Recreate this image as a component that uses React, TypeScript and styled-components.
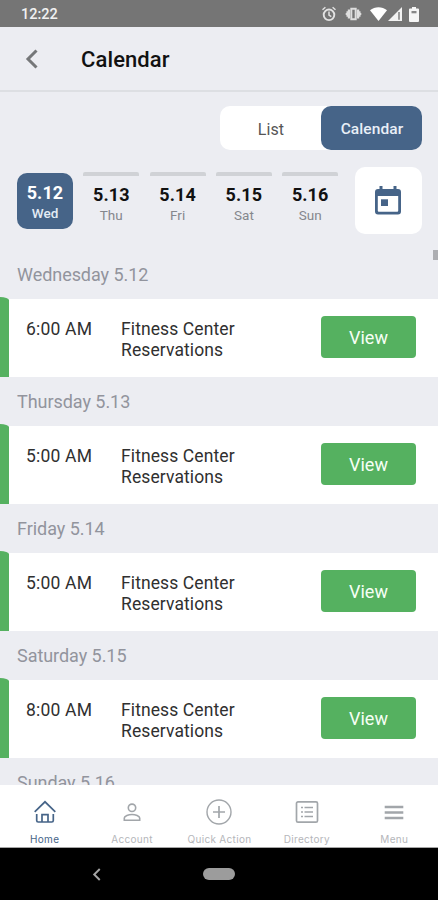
import React from "react";
import styled, { createGlobalStyle } from "styled-components";

const blue = "#466488";
const green = "#55b160";
const surface = "#ecedf2";

const GlobalStyle = createGlobalStyle`
  * { box-sizing: border-box; }
  body { margin: 0; background: ${surface}; font-family: Roboto, sans-serif; }
  button { font: inherit; border: 0; padding: 0; margin: 0; background: none; }
`;

const Screen = styled.div`
  width: 438px;
  height: 900px;
  display: flex;
  flex-direction: column;
  overflow: hidden;
  background: ${surface};
`;

const StatusBar = styled.div`
  height: 27px;
  flex: none;
  display: flex;
  align-items: center;
  justify-content: space-between;
  padding: 1px 19px 0 21px;
  background: #757575;
  color: #f1f1f1;
  font-size: 14.5px;
  font-weight: 500;
  line-height: 18px;
  span { padding-top: 1px; }
`;

const StatusIcons = styled.div`
  display: flex;
  align-items: center;
  svg { display: block; }
`;

const Header = styled.header`
  height: 65px;
  flex: none;
  display: flex;
  align-items: center;
  border-bottom: 2px solid #dddfe3;
  padding: 0 0 0 25px;
`;

const BackButton = styled.button`
  width: 56px;
  display: flex;
  svg { display: block; }
`;

const Title = styled.h1`
  margin: 2px 0 0;
  font-size: 22px;
  font-weight: 500;
  letter-spacing: 0.1px;
  color: #111;
`;

const Controls = styled.div`
  flex: none;
  height: 158px;
  padding: 14px 17px 0;
`;

const Segmented = styled.div`
  width: 202px;
  height: 44px;
  margin-left: auto;
  margin-right: -1px;
  display: flex;
  border-radius: 10px;
  background: #fff;
`;

const Segment = styled.button<{ $active?: boolean }>`
  flex: 1;
  padding: 2px 0 0 1px;
  border-radius: 10px;
  font-size: ${(p) => (p.$active ? "15.5px" : "16px")};
  letter-spacing: 0.1px;
  color: ${(p) => (p.$active ? "#e9eff7" : "#555")};
  background: ${(p) => (p.$active ? blue : "transparent")};
  font-weight: ${(p) => (p.$active ? 500 : 400)};
`;

const DateStrip = styled.div`
  display: flex;
  margin-top: 17px;
`;

const DayList = styled.div`
  display: flex;
  gap: 10.3px;
  padding-top: 6px;
`;

const Day = styled.button<{ $active?: boolean }>`
  width: 56px;
  height: 56px;
  display: flex;
  flex-direction: column;
  align-items: center;
  margin-top: ${(p) => (p.$active ? 0 : "-1px")};
  padding-top: ${(p) => (p.$active ? "9px" : "8px")};
  border-top: ${(p) => (p.$active ? "0" : "4px solid #d0d2d6")};
  border-radius: ${(p) => (p.$active ? "10px" : "2px")};
  background: ${(p) => (p.$active ? blue : "transparent")};
  color: ${(p) => (p.$active ? "#fff" : "#111")};
`;

const DayNumber = styled.span`
  font-size: 18px;
  line-height: 22px;
  font-weight: 700;
  letter-spacing: 0.1px;
`;

const DayName = styled.span<{ $active?: boolean }>`
  font-size: 13.5px;
  line-height: 19px;
  letter-spacing: 0.05px;
  font-weight: ${(p) => (p.$active ? 500 : 400)};
  color: ${(p) => (p.$active ? "#e4ecf5" : "#85878d")};
`;

const DateButton = styled.button`
  width: 67px;
  height: 67px;
  margin-left: auto;
  margin-right: -0.5px;
  display: flex;
  align-items: center;
  justify-content: center;
  border-radius: 10px;
  background: #fff;
`;

const Agenda = styled.main`
  position: relative;
  flex: 1;
  min-height: 0;
  overflow: hidden;
`;

const ScrollThumb = styled.div`
  position: absolute;
  right: 0;
  top: 0;
  width: 5px;
  height: 10px;
  background: #adaeb2;
`;

const DateHeading = styled.h2`
  margin: 0;
  height: 49px;
  padding: 0 17px 1px;
  display: flex;
  align-items: center;
  font-size: 18px;
  font-weight: 400;
  letter-spacing: -0.05px;
  color: #92949d;
`;

const EventRow = styled.article`
  height: 78px;
  display: flex;
  align-items: flex-start;
  background: #fff;
  color: #303030;
  font-size: 17.5px;
  line-height: 21px;
  letter-spacing: 0.1px;
`;

const Accent = styled.div`
  width: 9px;
  height: 80px;
  margin-top: -2px;
  border-top-right-radius: 9px 3px;
  background: ${green};
`;

const Time = styled.time`
  width: 95px;
  margin: 20px 0 0 17px;
  letter-spacing: 0.2px;
`;

const EventTitle = styled.div`
  width: 150px;
  margin-top: 20px;
`;

const ViewButton = styled.button`
  width: 95px;
  height: 42px;
  margin: 17px 22px 0 auto;
  padding-top: 1px;
  border-radius: 4px;
  background: ${green};
  color: #f5fff5;
  font-size: 18px;
  letter-spacing: 0;
`;

const TabBar = styled.nav`
  flex: none;
  height: 63px;
  padding-left: 1px;
  display: grid;
  grid-template-columns: repeat(5, 1fr);
  background: #fff;
  border-bottom: 1px solid #a5a5a5;
`;

const Tab = styled.button<{ $active?: boolean }>`
  display: flex;
  flex-direction: column;
  align-items: center;
  padding-top: 14px;
  font-family: Inter, sans-serif;
  font-size: 10px;
  letter-spacing: 0.3px;
  line-height: 12px;
  white-space: nowrap;
  color: ${(p) => (p.$active ? blue : "#b5b6ba")};
  svg { display: block; margin-bottom: 8px; color: ${(p) => (p.$active ? blue : "#a2a6aa")}; }
`;

const SystemBar = styled.div`
  flex: none;
  height: 52px;
  display: grid;
  grid-template-columns: 1fr 32px 1fr;
  align-items: center;
  background: #000;
`;

const SystemBack = styled.button`
  margin-left: 92px;
  display: flex;
`;

const HomePill = styled.div`
  height: 12px;
  border-radius: 6px;
  background: #9c9c9c;
`;

const AlarmIcon = () => (
  <svg width="16" height="16" viewBox="0 0 16 16" fill="none" stroke="#e2e2e2" strokeWidth="1.9">
    <circle cx="8" cy="8.8" r="5.3" />
    <path d="M1.5 3.7 4.4 1.2M14.5 3.7 11.6 1.2M8 5.5v3.6l2.3 1.5" strokeWidth="1.5" />
  </svg>
);
const VibrateIcon = () => (
  <svg width="17" height="14" viewBox="0 0 17 14" fill="#dedede">
    <path d="M5 2.6v8.8H2.8V9.800H1.500V8.300L.2 7l1.300-1.300V4.200h1.300V2.600zM12 2.600v8.800h2.200V9.800h1.300V8.300l1.300-1.300-1.300-1.300V4.200h-1.300V2.600z" />
    <path d="M6.300 1.800h4.400v10.400H6.300z" fill="none" stroke="#dedede" strokeWidth="2" />
  </svg>
);
const WifiIcon = () => (
  <svg width="17" height="14" viewBox="0 0 17 14" fill="#fff">
    <path d="M0 3.200C4.900-.8 12.100-.8 17 3.200L8.500 14z" />
  </svg>
);
const SignalIcon = () => (
  <svg width="14" height="14" viewBox="0 0 14 14">
    <path d="M14 0v14H0z" fill="#f2f2f2" />
    <path d="M11 5v7.700" stroke="#777" strokeWidth="1.400" />
  </svg>
);
const BatteryIcon = () => (
  <svg width="10" height="15" viewBox="0 0 10 15">
    <path d="M3 0h4v1.600h2q1 0 1 1V14q0 1-1 1H1q-1 0-1-1V2.600q0-1 1-1h2z" fill="#f6f6f6" />
    <path d="M2.500 4h5v2.300h-5z" fill="#888" />
  </svg>
);
const Chevron = ({ width, height, color }: { width: number; height: number; color: string }) => (
  <svg width={width} height={height} viewBox="0 0 13 20" fill="none" stroke={color} strokeWidth="3">
    <path d="M11.500 1.500 3 10l8.500 8.500" />
  </svg>
);
const CalendarIcon = () => (
  <svg width="26" height="29" viewBox="0 0 26 29" fill={blue}>
    <path d="M4.500 0h3v3h11V0h3v3h1.500a3 3 0 0 1 3 3v19.500a3 3 0 0 1-3 3H3a3 3 0 0 1-3-3V6a3 3 0 0 1 3-3h1.500zM2.800 10v14.700q0 1 1 1h18.400q1 0 1-1V10z" fillRule="evenodd" />
    <path d="M6 13.300h7v6.700H6z" />
  </svg>
);
const HomeIcon = () => (
  <svg width="24" height="26" viewBox="0 0 24 26" fill="none" stroke="currentColor" strokeWidth="1.700">
    <path d="M1.700 12.800 12 2.800l10.300 10M3.700 15v6.500q0 1.500 1.500 1.500h13.600q1.500 0 1.500-1.500V15M9 23v-7.300h6V23" />
  </svg>
);
const AccountIcon = () => (
  <svg width="24" height="26" viewBox="0 0 24 26" fill="none" stroke="currentColor" strokeWidth="1.600">
    <circle cx="12" cy="8.800" r="3.700" />
    <path d="M4.300 21.300v-2.200c0-2.300 4.300-3.600 7.700-3.600s7.700 1.300 7.700 3.600v2.200z" />
  </svg>
);
const PlusIcon = () => (
  <svg width="26" height="26" viewBox="0 0 26 26" fill="none" stroke="currentColor" strokeWidth="1.400">
    <circle cx="13" cy="13" r="12" />
    <path d="M13 7v12M7 13h12" strokeWidth="1.700" />
  </svg>
);
const DirectoryIcon = () => (
  <svg width="24" height="26" viewBox="0 0 24 26" fill="none" stroke="currentColor" strokeWidth="1.700">
    <rect x="1.500" y="2.800" width="21" height="20.400" rx="1.500" />
    <path d="M6 8.500h2M6 13h2M6 17.500h2M9.500 8.500h8.500M9.500 13h8.500M9.500 17.500h8.500" />
  </svg>
);
const MenuIcon = () => (
  <svg width="24" height="26" viewBox="0 0 24 26" fill="none" stroke="currentColor" strokeWidth="2.600">
    <path d="M2.700 8h18.600M2.700 13.500h18.600M2.700 19h18.600" />
  </svg>
);

const days = [["5.12", "Wed"], ["5.13", "Thu"], ["5.14", "Fri"], ["5.15", "Sat"], ["5.16", "Sun"]];
const events = [
  ["Wednesday 5.12", "6:00 AM"],
  ["Thursday 5.13", "5:00 AM"],
  ["Friday 5.14", "5:00 AM"],
  ["Saturday 5.15", "8:00 AM"],
];
const tabs = [
  { label: "Home", Icon: HomeIcon },
  { label: "Account", Icon: AccountIcon },
  { label: "Quick Action", Icon: PlusIcon },
  { label: "Directory", Icon: DirectoryIcon },
  { label: "Menu", Icon: MenuIcon },
];

const Gap = styled.i<{ $size: number }>`
  width: ${(p) => p.$size}px;
`;

export default function App() {
  return (
    <Screen>
      <GlobalStyle />
      <StatusBar>
        <span>12:22</span>
        <StatusIcons>
          <AlarmIcon /><Gap $size={8} />
          <VibrateIcon /><Gap $size={8} />
          <WifiIcon /><Gap $size={1} />
          <SignalIcon /><Gap $size={7} />
          <BatteryIcon />
        </StatusIcons>
      </StatusBar>
      <Header>
        <BackButton aria-label="Back"><Chevron width={13} height={20} color="#757779" /></BackButton>
        <Title>Calendar</Title>
      </Header>
      <Controls>
        <Segmented>
          <Segment>List</Segment>
          <Segment $active>Calendar</Segment>
        </Segmented>
        <DateStrip>
          <DayList>
            {days.map(([date, name], i) => (
              <Day key={date} $active={i === 0}>
                <DayNumber>{date}</DayNumber>
                <DayName $active={i === 0}>{name}</DayName>
              </Day>
            ))}
          </DayList>
          <DateButton aria-label="Pick a date"><CalendarIcon /></DateButton>
        </DateStrip>
      </Controls>
      <Agenda>
        {events.map(([date, time]) => (
          <section key={date}>
            <DateHeading>{date}</DateHeading>
            <EventRow>
              <Accent />
              <Time>{time}</Time>
              <EventTitle>Fitness Center<br />Reservations</EventTitle>
              <ViewButton>View</ViewButton>
            </EventRow>
          </section>
        ))}
        <DateHeading>Sunday 5.16</DateHeading>
        <ScrollThumb />
      </Agenda>
      <TabBar>
        {tabs.map(({ label, Icon }, i) => (
          <Tab key={label} $active={i === 0}>
            <Icon />
            {label}
          </Tab>
        ))}
      </TabBar>
      <SystemBar>
        <SystemBack aria-label="System back"><Chevron width={9} height={13} color="#a5a5a5" /></SystemBack>
        <HomePill />
      </SystemBar>
    </Screen>
  );
}
